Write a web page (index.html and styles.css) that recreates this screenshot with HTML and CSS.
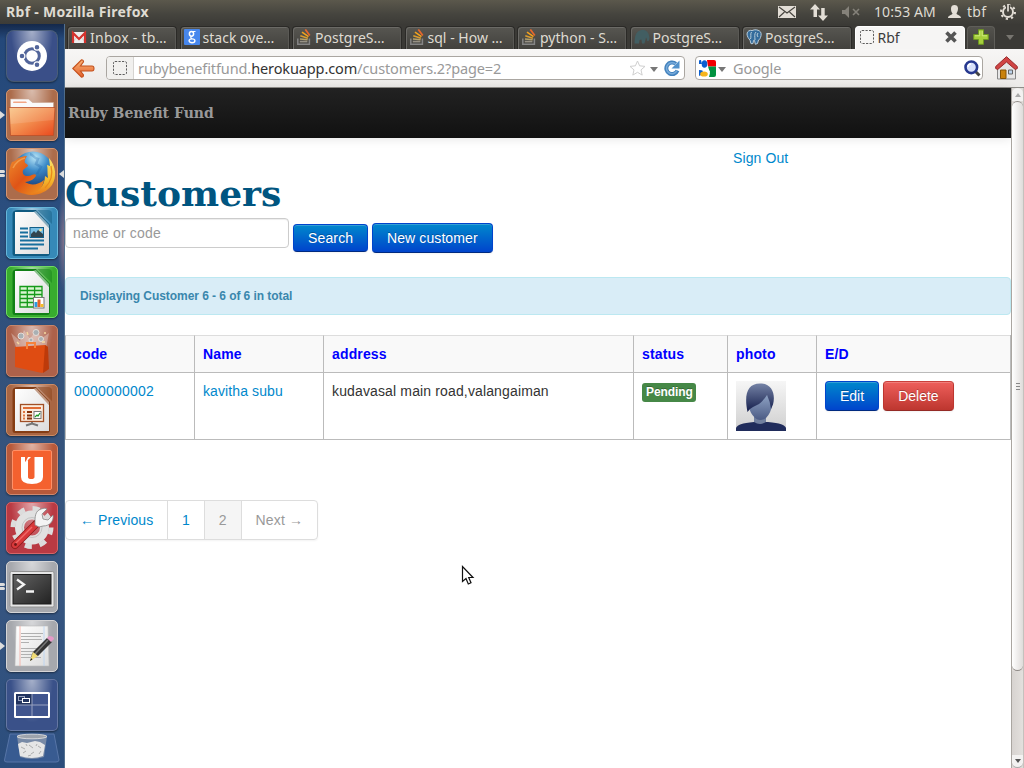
FILE: index.html
```html
<!DOCTYPE html>
<html lang="en">
<head>
<meta charset="utf-8">
<title>Rbf</title>
<link rel="stylesheet" href="styles.css">
</head>
<body>
<svg class="defs" width="0" height="0" aria-hidden="true">
  <defs>
    <linearGradient id="paper" x1="0" y1="0" x2="1" y2="1"><stop offset="0" stop-color="#fff"/><stop offset="1" stop-color="#dcdcdc"/></linearGradient>
    <linearGradient id="folder" x1="0" y1="0" x2="1" y2="1"><stop offset="0" stop-color="#f9c586"/><stop offset=".5" stop-color="#f28a4c"/><stop offset="1" stop-color="#e9481c"/></linearGradient>
    <linearGradient id="arrow" x1="0" y1="0" x2="0" y2="1"><stop offset="0" stop-color="#f9b478"/><stop offset="1" stop-color="#e4602a"/></linearGradient>
    <radialGradient id="globe" cx=".55" cy=".15" r=".8"><stop offset="0" stop-color="#b9e6f7"/><stop offset=".4" stop-color="#3b8ac8"/><stop offset="1" stop-color="#12336f"/></radialGradient>
    <linearGradient id="fox" x1="0" y1="0" x2="1" y2="1"><stop offset="0" stop-color="#ee8a2c"/><stop offset=".5" stop-color="#df5416"/><stop offset="1" stop-color="#ef9a22"/></linearGradient>
    <linearGradient id="flame" x1="0" y1="0" x2="0" y2="1"><stop offset="0" stop-color="#fbe36b"/><stop offset=".6" stop-color="#f5b92c"/><stop offset="1" stop-color="#e9781a"/></linearGradient>
    <linearGradient id="screen" x1="0" y1="0" x2="1" y2="1"><stop offset="0" stop-color="#636363"/><stop offset="1" stop-color="#222"/></linearGradient>
    <linearGradient id="hair" x1="0" y1="0" x2="0" y2="1"><stop offset="0" stop-color="#7583a6"/><stop offset="1" stop-color="#131d4b"/></linearGradient>
    <linearGradient id="face" x1="0" y1="0" x2="0" y2="1"><stop offset="0" stop-color="#91a5c6"/><stop offset="1" stop-color="#4b5b85"/></linearGradient>
    <linearGradient id="photobg" x1="0" y1="0" x2="0" y2="1"><stop offset="0" stop-color="#f6f6f6"/><stop offset="1" stop-color="#cfcfcf"/></linearGradient>
    <symbol id="stack" viewBox="0 0 16 16"><path d="M1.800 9.500v5.700h11.600V9.500" fill="none" stroke="#858585" stroke-width="1.500"/><path d="M3.800 12.600h7.600" stroke="#969185" stroke-width="1.600"/><path d="M4 10l7.600.8" stroke="#b3a06b" stroke-width="1.500"/><path d="M4.300 6.800l7.600 2.400" stroke="#d99c30" stroke-width="1.600"/><path d="M6 3.200l6.500 4.500" stroke="#f4a21c" stroke-width="1.600"/><path d="M9.300.4l4.500 6.200" stroke="#e8672c" stroke-width="1.700"/></symbol>
    <symbol id="blank" viewBox="0 0 16 16"><rect x="1.500" y="1.500" width="13" height="13" rx="1.500" fill="none" stroke="#5d5d5d" stroke-dasharray="2.200 1.300"/></symbol>
    <symbol id="elephant" viewBox="0 0 16 16"><path d="M1 5C1 2 4 .8 6 1.600 9 0 12 1 13.500 2c2 1 2 4 1 6.500-.5 1.400-1 2.300-2 2.500l-1 3.500-2.200.8-.8-4-1 .1-.5 3.200-2 .1L4 11.200C2.500 9.500 1.200 7.500 1 5z"/></symbol>
    <symbol id="mammoth" viewBox="0 0 16 16"><path d="M.5 14.500Q.5 5 4 2.500 9-.8 13 2.500q3 3 2.300 8-.3 1.500-1.500 1.500-1.300 0-.8-2l-1-1.500-1.500 6H8l-.5-4-2 .5-.5 3.500z"/></symbol>
    <symbol id="office" viewBox="0 0 52 52"><path d="M12 3h18l14 15v28q0 3-3 3H9q-2.500 0-2.500-2V7q0-4 5.500-4z" fill="currentColor"/><path d="M31 3h11q4 0 4 4v10z" fill="currentColor" opacity=".5"/><path d="M9 5h19l15 16v26H9z" fill="url(#paper)"/><path d="M27 5l16 16v-3L30 4z" fill="#fff" opacity=".5"/></symbol>
  </defs>
</svg>
<header class="panel">
  <span class="panel-title">Rbf - Mozilla Firefox</span>
  <div class="tray">
    <svg class="t-mail" width="18" height="12" viewBox="0 0 18 12"><rect width="18" height="12" fill="#e3ded6"/><path d="M1 1l8 6 8-6M1 11l5.500-5M17 11l-5.500-5" fill="none" stroke="#45433d" stroke-width="1.100"/></svg>
    <svg class="t-net" width="18" height="17" viewBox="0 0 18 17"><path d="M5 0l5 5.500H7V13H3.500V5.500H0zM13 17l-5-5.500h3.200V4h3.500v7.500H18z" fill="#e3ded6"/></svg>
    <svg class="t-vol" width="18" height="12" viewBox="0 0 18 12"><path d="M0 4h3l4-4v12L3 8H0z" fill="#85827a"/><path d="M11 3l6 6M17 3l-6 6" stroke="#85827a" stroke-width="1.600"/></svg>
    <span class="clock">10:53 AM</span>
    <svg class="t-user" width="13" height="14" viewBox="0 0 13 14"><path d="M3 3.500C3 1 4.500 0 6.500 0S10 1 10 3.500 9 7 8.500 8.500c0 1.500 4.500 1.500 4.500 4.500H0c0-3 4.500-3 4.500-4.500C3.500 7 3 6 3 3.500z" fill="#e3ded6"/></svg>
    <span class="user">tbf</span>
    <svg class="t-gear" width="16" height="16" viewBox="0 0 16 16"><circle cx="8" cy="8" r="5" fill="none" stroke="#e3ded6" stroke-width="2"/><circle cx="8" cy="8" r="7" fill="none" stroke="#e3ded6" stroke-width="2" stroke-dasharray="2.200 3.300"/><path d="M8 1v7" stroke="#45433d" stroke-width="4"/><path d="M8 0v7.500" stroke="#e3ded6" stroke-width="1.700"/></svg>
  </div>
</header>
<div class="desktop">
  <nav class="launcher">
    <div class="tile navy"><svg viewBox="0 0 52 52"><circle cx="26" cy="26" r="15" fill="#fff"/><circle cx="26" cy="26" r="7.300" fill="none" stroke="#52659a" stroke-width="3"/><g stroke="#fff" stroke-width="1.200" fill="#52659a"><circle cx="16" cy="26" r="2.900"/><circle cx="31" cy="17.300" r="2.900"/><circle cx="31" cy="34.700" r="2.900"/></g></svg></div>
    <div class="tile copper"><i class="run one"></i><svg viewBox="0 0 52 52"><path d="M4.500 10h18l4 3.500h21V20h-43z" fill="#fafafa" stroke="#c9a491" stroke-width=".6"/><path d="M7.500 12.500H20l1 1.500H7z" fill="#f2a584"/><path d="M3 18.500h46l-1.500 28h-43z" fill="url(#folder)" stroke="#ba4f28" stroke-width=".8"/><path d="M3.500 19h45l-1 12-43 4z" fill="#fff" opacity=".12"/></svg></div>
    <div class="tile copper"><i class="run two"></i><i class="focus"></i><svg viewBox="0 0 52 52"><circle cx="27" cy="24" r="20.500" fill="url(#globe)"/><path d="M24 6c4 1 3 4 8 5l-2 5 5 3-4 7" stroke="#1e60a5" stroke-width="2.500" fill="none" opacity=".3"/><path d="M43 10c7 8 8 19 3 27-6 8-17 12-27 9 13-1 20-8 20-18l3 2c-1-5 0-9-1-13l3 1z" fill="url(#flame)"/><path d="M45 18c2 8 0 16-6 22" fill="none" stroke="#e98a1c" stroke-width="1.300"/><path d="M6 14c1 0 3-1 4-2 3-3 7-4 11-4-2 3-3 5-2 7 2 1 3 2 3 3l-5 4c-1 4 1 6 5 6 4 0 6-3 8-1 0 3-6 7-11 7 6 4 13 3 19-2-1 9-9 15-18 14C9 45 3 37 3 27c0-5 1-9 3-13z" fill="url(#fox)"/><path d="M7 20c3-6 8-9 12-10" fill="none" stroke="#f6ab58" stroke-width="1.500" opacity=".7"/></svg></div>
    <div class="tile writer"><svg viewBox="0 0 52 52"><use href="#office"/><path d="M14 21.500h8m-8 4h8m-8 4h8m-8 4h24m-24 4h24m-24 4h18" stroke="#176f9d" stroke-width="1.800"/><rect x="24" y="20.500" width="13.500" height="10" fill="#79bfe4" stroke="#135f88"/><path d="M25 30v-3l3-3 2 2 2-3 5 4v3z" fill="#31454f"/><circle cx="34.500" cy="23" r="1.300" fill="#ffe38a"/></svg></div>
    <div class="tile calc"><svg viewBox="0 0 52 52"><use href="#office"/><path d="M14 20.500h22V41H14zm0 4h22m-22 4h22m-22 4h22m-22 4h22M21.300 20.500V41m7.300-20.500V41" fill="#d9f5d0" stroke="#159a19" stroke-width="1.300"/><rect x="27.500" y="31.500" width="10.500" height="10.500" fill="#fff" stroke="#777"/><path d="M28.500 36h3v5h-3z" fill="#2b9be0"/><path d="M31.500 33.500h3V41h-3z" fill="#e56326"/><path d="M34.500 38h3v3h-3z" fill="#f5bc2a"/></svg></div>
    <div class="tile copper2"><svg viewBox="0 0 52 52"><path d="M10 22L5 8l9 8 4-11 6 9 7-10 4 10 8-6-3 15z" fill="#fff" opacity=".3"/><g fill="#a9b0b4" stroke="#e5ddd8"><circle cx="15" cy="11" r="3"/><circle cx="30" cy="7.500" r="3"/><circle cx="35" cy="14" r="2.500"/><circle cx="25" cy="15" r="2"/></g><path d="M11 17l2 2m8-12 1 3m17-3v2m-3 8h3" stroke="#f5d9a0" stroke-width="1.500"/><path d="M9 22l30-2 3 2-1 23-5 3-27-6z" fill="#df4c12"/><path d="M39 20l3 2 1 22-6 4z" fill="#bd3a0a"/><path d="M21 24v-6h8v5" fill="none" stroke="#f7823a" stroke-width="2"/></svg></div>
    <div class="tile impress"><svg viewBox="0 0 52 52"><use href="#office"/><rect x="14.500" y="20.500" width="23" height="17" fill="#fbebdd" stroke="#a14f25" stroke-width="1.300"/><path d="M17 24h18" stroke="#df6c36" stroke-width="2"/><path d="M17 28h2m-2 3.500h2m-2 3h2" stroke="#e0763f" stroke-width="2"/><path d="M21 28h5m-5 3.500h5m-5 3h5" stroke="#87320a" stroke-width="2"/><rect x="28" y="27.500" width="7" height="7" fill="#fff" stroke="#777"/><path d="M29 33l2-2 1 1 2-3" fill="none" stroke="#1c9a25" stroke-width="1.200"/><path d="M26 38v2m-6 1.500 6-2 6 2" fill="none" stroke="#777" stroke-width="2"/></svg></div>
    <div class="tile one-tile"><svg viewBox="0 0 52 52"><rect x="6.500" y="7.500" width="39" height="39" rx="1.500" fill="#f4612f" stroke="#ff9067"/><path d="M15 14h4v5l3-2v17q0 2 3.200 2t3.300-2V14H37v20q0 7-11 7t-11-7z" fill="#fff"/><path d="M19 20l6-6h-3z" fill="#fff"/></svg></div>
    <div class="tile red"><svg viewBox="0 0 52 52"><g fill="none"><circle cx="26" cy="25.500" r="12.500" stroke="#e1e1e1" stroke-width="9"/><circle cx="26" cy="25.500" r="19" stroke="#dcdcdc" stroke-width="5" stroke-dasharray="7 7.920"/><circle cx="26" cy="25.500" r="10" stroke="#c4c4c4" stroke-width="1"/></g><path d="M9 43L30 22" stroke="#8e1a1a" stroke-width="7.800" stroke-linecap="round"/><path d="M9 43L29 23" stroke="#d8383a" stroke-width="6.200" stroke-linecap="round"/><path d="M29 20c0-5 0-11 6-13 3-1 5-1 6 0l-5 5 1 5 5 1 5-5c1 6-3 11-10 11l-4 1-4-2z" fill="#f4f4f4" stroke="#888" stroke-width=".8"/><path d="M9 42l17-17" stroke="#ef6a68" stroke-width="1.500"/><circle cx="9.500" cy="42.500" r="1.400" fill="#701717"/></svg></div>
    <div class="tile silver"><i class="run two"></i><svg viewBox="0 0 52 52"><rect x="4" y="10.500" width="44" height="35.500" rx="1.500" fill="#e6e6e6" stroke="#929292"/><rect x="7" y="13.500" width="38" height="29.500" fill="url(#screen)" stroke="#1c1c1c"/><path d="M11 18.500l7 5-7 5M20 30.500h8" fill="none" stroke="#f4f4f4" stroke-width="2.300"/></svg></div>
    <div class="tile silver"><i class="run one"></i><svg viewBox="0 0 52 52"><path d="M10 6h32l1 40H9z" fill="url(#paper)" stroke="#bbb" stroke-width=".6"/><path d="M14 6v40" stroke="#f6a9a0" stroke-width=".8"/><path d="M38 6v40" stroke="#b6d3f5" stroke-width=".8"/><path d="M15 13.500h22m-22 3h20m-20 3h21m-21 3h8m-8 6h21m-21 3h19m-19 3h18m-18 3h20" stroke="#b0b0b0" stroke-width="1"/><path d="M25 37l2-5 14-14 5 4-14 14z" fill="#343434"/><path d="M29 34l13-14" stroke="#777" stroke-width="1.500"/><path d="M24 41l3-9 5 4z" fill="#f1dc76"/><path d="M24 41l1-3 1.500 1.500z" fill="#222"/><path d="M41 18l2-2q5 0 5 3l-3 3z" fill="#e59ac8"/></svg></div>
    <div class="tile workspace"><svg viewBox="0 0 52 52"><rect x="9" y="14" width="34" height="24" rx=".5" fill="#40558e" stroke="#fff" stroke-width="2"/><path d="M10 15h16v11H10z" fill="#22345f"/><path d="M26 15v22M10 26h32" stroke="#98a2c0" stroke-width="1"/><rect x="12.500" y="17.500" width="6" height="4" fill="none" stroke="#9ba5c0"/><rect x="16.500" y="19.500" width="7" height="4" fill="#22345f" stroke="#fff"/></svg></div>
    <div class="trash"><svg width="56" height="31" viewBox="0 0 56 31"><path d="M6 1h44l5 26q0 2-3 2H3q-3 0-2.500-2z" fill="#385b91" stroke="#5775a7"/><path d="M13 3h30l-3 21q-12 4-24 0z" fill="#8e9aae" opacity=".75"/><ellipse cx="28" cy="3.500" rx="15" ry="2.300" fill="#9da3ac" stroke="#e5e5e5" stroke-width=".8"/><path d="M14 11l4-2 5 1 4-1 4-1 5 1 5 3-2 11q-11 4-23 0z" fill="#e6e6e6"/><path d="M17 14l4 2m4-4l4 3m5-2l3 2M19 20l3-2m5 3l3-2m5 2l2-3M22 11l1 2M33 11l-1 2M24 23l3-1" stroke="#adadad" fill="none"/></svg></div>
  </nav>
  <main class="browser">
    <div class="tabs">
      <div class="tab"><svg viewBox="0 0 16 16"><rect x="1" y="3" width="14" height="11" fill="#eee"/><path d="M1 14l5-6m9 6l-5-6" stroke="#ccc"/><path d="M2 14V4l6 6 6-6v10" fill="none" stroke="#d5322d" stroke-width="2.200"/></svg><span class="t1">Inbox - tb…</span></div>
      <div class="tab"><svg viewBox="0 0 16 16"><rect width="16" height="16" rx="1" fill="#4787ed"/><g fill="none" stroke="#fff"><ellipse cx="7.500" cy="4.800" rx="2.100" ry="2.400" stroke-width="1.500"/><path d="M9 2.500h2.500M8 7.300q-2.500 1 0 2.300" stroke-width="1.200"/><ellipse cx="8" cy="11.800" rx="2.900" ry="1.900" stroke-width="1.400"/></g></svg><span>stack ove…</span></div>
      <div class="tab"><svg><use href="#stack"/></svg><span>PostgreS…</span></div>
      <div class="tab"><svg><use href="#stack"/></svg><span>sql - How …</span></div>
      <div class="tab"><svg><use href="#stack"/></svg><span>python - S…</span></div>
      <div class="tab"><svg fill="#425e62"><use href="#mammoth"/></svg><span>PostgreS…</span></div>
      <div class="tab"><svg fill="#346c9c" stroke="#b7ccda" stroke-width="1"><use href="#elephant"/><path d="M5.500 3c-1.500 2 0 5-1 7M10 3c-2 2-1 5-1 8m3-7q-2 2 0 4" fill="none"/></svg><span>PostgreS…</span></div>
      <div class="tab active"><svg><use href="#blank"/></svg><span>Rbf</span><svg class="close" viewBox="0 0 12 12"><path d="M1.500 1.500l9 9m0-9l-9 9" stroke="#555" stroke-width="3.600"/></svg></div>
      <div class="newtab"><svg width="16" height="16" viewBox="0 0 16 16"><path d="M5.500.7h5v4.800h4.800v5h-4.800v4.800h-5v-4.800H.7v-5h4.800z" fill="#a6cf3c" stroke="#6e9820"/><path d="M6.800 2v4.800H2m7.200-4.800v4.800H14" fill="none" stroke="#d7ef8c" stroke-width=".8"/></svg></div>
      <svg class="alltabs" width="8" height="5" viewBox="0 0 8 5"><path d="M0 0h8L4 5z" fill="#77756f"/></svg>
    </div>
    <div class="toolbar">
      <svg class="back" width="23" height="19" viewBox="0 0 23 19"><path d="M.8 9.500L9.500.8q2 0 2 2L8.500 7H20q2 0 2 2.500T20 12H8.500l3 4q0 2.200-2 2.200z" fill="url(#arrow)" stroke="#c4511d" stroke-width="1.100"/></svg>
      <div class="url"><div class="site"><svg width="16" height="16"><use href="#blank"/></svg></div><span class="addr">rubybenefitfund.<b>herokuapp.com</b>/customers.2?page=2</span>
        <svg class="star" width="17" height="16" viewBox="0 0 17 16"><path d="M8.500 1l2.100 4.800 5.400.6-4 3.500 1.200 5.200-4.700-2.800-4.700 2.800L5 9.900 1 6.400l5.400-.6z" fill="#fff" stroke="#cfcfcf"/></svg>
        <svg class="down" width="8" height="5" viewBox="0 0 8 5"><path d="M0 0h8L4 5z" fill="#777"/></svg>
        <svg class="reload" width="16" height="16" viewBox="0 0 16 16"><path d="M13.500 10.500A5.800 5.800 0 1 1 11.800 3.800" fill="none" stroke="#4382bd" stroke-width="4"/><path d="M15.500.5v8h-8z" fill="#5191cb"/><path d="M13 10.500A5.500 5.500 0 1 1 11.500 4" fill="none" stroke="#76aada" stroke-width="1.500"/></svg></div>
      <div class="search"><svg width="17" height="17" viewBox="0 0 17 17"><rect width="17" height="17" fill="#fff"/><path d="M8 0h7q2 0 2 2v4.500H9z" fill="#f20000"/><path d="M9 6.500h8V15q0 2-2 2h-5l1-4z" fill="#009240"/><path d="M0 10q3 0 4 1l-2 4-2 1z" fill="#0b5fd0"/><path d="M0 1q0-1 1-1h1l1 4H0z" fill="#0b5fd0"/><ellipse cx="5.500" cy="4" rx="2.800" ry="3.800" fill="#0b5fd0"/><path d="M4 8.500l4-1 3 4-1 1-6-1z" fill="#fff"/><ellipse cx="5" cy="14" rx="3.800" ry="2.600" fill="#f6b51c"/></svg>
        <svg class="sdown" width="8" height="5" viewBox="0 0 8 5"><path d="M0 0h8L4 5z" fill="#777"/></svg><span>Google</span>
        <svg class="mag" width="17" height="17" viewBox="0 0 17 17"><path d="M11 11l4.500 4.500" stroke="#444" stroke-width="3"/><circle cx="7.300" cy="7.300" r="5.800" fill="#d7e0fa" stroke="#26388f" stroke-width="2.600"/><path d="M4 7q0-3 3-3" stroke="#fff" stroke-width="1.500" fill="none"/></svg></div>
      <svg class="home" width="23" height="24" viewBox="0 0 23 24"><path d="M2.500 11v12h18V11l-9-7z" fill="#e6e6e6" stroke="#888"/><path d="M5.500 14h5.500v8.500H5.500z" fill="#c9820d" stroke="#875507"/><path d="M13.500 14h4v4h-4z" fill="#bcd3ea" stroke="#666"/><path d="M.7 12.500v-2L11.500.7l10.800 9.800v2l-2 1-8.800-7.500-8.800 7.500z" fill="#d04444" stroke="#962929"/></svg>
    </div>
    <div class="viewport">
      <div class="page">
        <div class="navbar"><a class="brand">Ruby Benefit Fund</a></div>
        <div class="signout"><a>Sign Out</a></div>
        <h1>Customers</h1>
        <div class="searchform"><input class="field" type="text" placeholder="name or code"><button class="btn primary search-btn">Search</button><a class="btn primary new-btn">New customer</a></div>
        <div class="alert">Displaying Customer 6 - 6 of 6 in total</div>
        <table class="grid">
          <colgroup><col class="c1"><col class="c1"><col class="c3"><col class="c4"><col class="c5"><col></colgroup>
          <thead><tr><th>code</th><th>Name</th><th>address</th><th>status</th><th>photo</th><th>E/D</th></tr></thead>
          <tbody><tr><td class="code"><a>0000000002</a></td><td><a>kavitha subu</a></td><td class="address">kudavasal main road,valangaiman</td><td><span class="label">Pending</span></td>
            <td><svg class="photo" width="50" height="50" viewBox="0 0 50 50"><path d="M0 0h50v50H0z" fill="url(#photobg)"/><path d="M0 50v-3c1-3 6-5 18-6h14c12 1 17 3 18 6v3z" fill="#202c5b"/><path d="M18 34h12v7q-6 4-12 0z" fill="#71809f"/><path d="M13 26l18-13 5 11q-1 8-6 13-6 4-11 0-5-5-6-11z" fill="url(#face)"/><path d="M11.500 31C8 14 11 2.500 24 2.500c13 0 15.500 12 13 21l-2 4.500q-1-8-4-14-3 5-8 9-4 2-6 3-4 2-5.500 5z" fill="url(#hair)"/></svg></td>
            <td><div class="actions"><a class="btn primary">Edit</a><a class="btn danger">Delete</a></div></td></tr></tbody>
        </table>
        <div class="pagination"><a class="prev">← Previous</a><a>1</a><span class="current">2</span><span class="next">Next →</span></div>
      </div>
      <div class="scrollbar"><div class="sb-btn"><svg width="6" height="4" viewBox="0 0 6 4"><path d="M0 4h6L3 0z" fill="#aaa"/></svg></div><div class="thumb"><i></i><i></i><i></i></div><div class="track"></div><div class="sb-btn bottom"><svg width="6" height="4" viewBox="0 0 6 4"><path d="M0 0h6L3 4z" fill="#555"/></svg></div></div>
    </div>
  </main>
</div>
<svg class="cursor" width="14" height="22" viewBox="0 0 14 22"><path d="M1.500 1.500v15l3.500-3 2.300 5.500 2.700-1.200-2.300-5.300H12z" fill="#fff" stroke="#111" stroke-width="1.200"/></svg>
</body>
</html>
```
FILE: styles.css
```css
* { box-sizing: border-box; }
body { margin: 0; width: 1024px; height: 768px; overflow: hidden; background: #fff; font-family: "Noto Sans", "Open Sans", sans-serif; }
svg { flex: none; display: block; }
.defs { position: absolute; }

.panel { height: 24px; display: flex; align-items: center; justify-content: space-between; padding: 0 8px 0 6px; background: linear-gradient(#5b584c, #45443e 60%, #3c3b37); color: #dfdbd2; font-size: 14px; line-height: 24px; }
.panel-title { font-weight: bold; font-size: 14px; letter-spacing: .3px; }
.tray { display: flex; align-items: center; }
.t-net { margin-left: 14px; }
.t-vol { margin-left: 14px; }
.clock { margin-left: 14px; width: 62px; white-space: nowrap; letter-spacing: .1px; }
.t-user { margin-left: 12px; }
.user { margin-left: 6px; width: 20px; letter-spacing: .3px; }
.t-gear { margin-left: 13px; }

.desktop { display: flex; height: 744px; }
.launcher { width: 65px; display: flex; flex-direction: column; gap: 7px; padding: 6px 0 0 6px; background: radial-gradient(ellipse at 100% 29%, #83728a 0, transparent 7%), linear-gradient(#14284a, #24487a 2%, #2b4e7e 25%, #34527b 50%, #375681 75%, #2b4d7c); border-right: 1px solid #52708f; }
.tile { position: relative; flex: none; width: 52px; height: 52px; border-radius: 5px; border: 1px solid rgba(255,255,255,.22); box-shadow: 0 1px 2px rgba(0,0,0,.45); }
.tile > svg { position: relative; width: 52px; height: 52px; margin: -1px; }
.tile::before { content: ""; position: absolute; inset: 0; border-radius: 4px; background: radial-gradient(ellipse at 50% 0, rgba(255,255,255,.55), transparent 60%); }
.navy { background: #3a4f88; background-clip: padding-box; border-radius: 8px; }
.workspace { background: #3a5189; }
.copper { background: #ac6c4b; border-color: #d29572; }
.copper2 { background: #ad614a; border-color: #c7866b; }
.writer { background: #3689b8; border-color: #66b6da; color: #115b81; }
.calc { background: #38ac2e; border-color: #70db62; color: #128016; }
.impress { background: #a96643; border-color: #cc8c65; color: #853d14; }
.one-tile { background: #b8593a; border-color: #d0886e; }
.red { background: #b93a43; border-color: #d66568; }
.silver { background: #a6a8ad; border-color: #d5d5d7; }
.run { position: absolute; left: -7px; }
.run.one { top: 21px; border-left: 5px solid #ddd; border-top: 4px solid transparent; border-bottom: 4px solid transparent; }
.run.two { top: 21px; width: 5px; height: 7px; }
.run.two::before, .run.two::after { content: ""; display: block; height: 3px; margin-bottom: 1px; background: #ddd; border-radius: 0 2px 2px 0; }
.focus { position: absolute; right: -7px; top: 21px; border-right: 5px solid #ddd; border-top: 4px solid transparent; border-bottom: 4px solid transparent; }
.trash { margin: -5px 0 0 -2px; }

.browser { width: 959px; display: flex; flex-direction: column; }
.tabs { height: 25px; display: flex; align-items: flex-end; gap: 2.5px; padding-left: 2px; background: #3b3a36; }
.tab { flex: none; width: 110px; height: 23px; display: flex; align-items: center; gap: 3px; padding: 0 4px 2px 3px; border-radius: 4px 4px 0 0; border: 1px solid #2b2a27; border-bottom: 0; background: linear-gradient(#575651, #42413d); box-shadow: inset 1px 1px 0 #6b6a66, inset -1px 0 0 #5a5955; color: #dfdbd2; font-size: 14px; white-space: nowrap; }
.tab > svg { width: 16px; height: 16px; }
.tab > span { letter-spacing: .02px; }
.tab > .t1 { letter-spacing: .25px; }
.tab.active { background: #f6f5f4; border-color: #fff; color: #3c3c3c; box-shadow: none; }
.tab > .close { width: 12px; height: 12px; margin-left: auto; margin-right: 3px; }
.newtab { flex: none; width: 28px; height: 23px; display: flex; align-items: center; justify-content: center; padding-bottom: 2px; border-radius: 4px 4px 0 0; border: 1px solid #5f5e59; border-bottom: 0; background: linear-gradient(#53524d, #403f3b); }
.alltabs { margin: 0 0 9px 8px; }
.toolbar { height: 39px; display: flex; align-items: center; padding: 0 6px 0 7px; background: linear-gradient(#f7f6f5, #eceae8); border-bottom: 1px solid #8f8d89; }
.url, .search { height: 24px; display: flex; align-items: center; border: 1px solid #aaa6a1; border-radius: 4px; background: #fff; color: #999; font-size: 14.5px; white-space: nowrap; }
.url { width: 579px; margin-left: 11px; padding-right: 4px; }
.site { width: 27px; height: 22px; display: flex; align-items: center; justify-content: center; background: #f1f0ee; border-right: 1px solid #d6d4d1; border-radius: 3px 0 0 3px; }
.addr { margin-left: 4px; width: 364px; letter-spacing: -.11px; }
.addr b { font-weight: normal; color: #333; }
.star { margin-left: auto; }
.down { margin: 2px 6px 0 4px; }
.search { width: 288px; margin-left: 10px; padding: 0 1px 0 3px; }
.search span { letter-spacing: -.1px; }
.sdown { margin: 2px 7px 0 2px; }
.mag { margin-left: auto; }
.home { margin-left: 12px; }

.viewport { flex: 1; display: flex; min-height: 0; }
.page { width: 946px; background: #fff; color: #333; font: 14px/20px "Liberation Sans", Arial, sans-serif; }
.page a { color: #0088cc; text-decoration: none; }
.navbar { height: 50px; padding: 15px 3px; background: linear-gradient(#222, #111); box-shadow: 0 1px 10px rgba(0,0,0,.1); }
.page .brand { color: #999; font: bold 14px/20px "DejaVu Serif", serif; display: block; }
.signout { padding: 10px 0 0 668px; letter-spacing: .1px; }
h1 { margin: 5px 0 0; color: #005580; font: bold 36px/40px "DejaVu Serif", serif; letter-spacing: .05px; }
.searchform { display: flex; align-items: center; gap: 4px; margin-top: 5px; height: 40px; }
.field { align-self: flex-start; width: 224px; height: 30px; padding: 4px 7px; border: 1px solid #ccc; border-radius: 4px; box-shadow: inset 0 1px 1px rgba(0,0,0,.075); font: 14px/20px "Liberation Sans", Arial, sans-serif; letter-spacing: .2px; }
.field::placeholder { color: #999; opacity: 1; }
.btn { display: block; height: 30px; padding: 4px 14px; border: 1px solid; border-radius: 4px; font: 14px/20px "Liberation Sans", Arial, sans-serif; text-shadow: 0 -1px 0 rgba(0,0,0,.25); box-shadow: inset 0 1px 0 rgba(255,255,255,.2), 0 1px 2px rgba(0,0,0,.05); white-space: nowrap; }
.page .btn { color: #fff; }
.primary { background: linear-gradient(#0088cc, #0044cc); border-color: #0044cc #0044cc #002a80; }
.danger { background: linear-gradient(#ee5f5b, #bd362f); border-color: #c9403b #bd362f #942a25; }
.search-btn { width: 75px; height: 28px; padding: 3px 14px; letter-spacing: .15px; }
.new-btn { width: 121px; letter-spacing: .1px; }
.alert { margin-top: 19px; height: 38px; padding: 8px 14px; border: 1px solid #bce8f1; border-radius: 4px; background: #d9edf7; color: #3a87ad; font-weight: bold; font-size: 12px; letter-spacing: -.06px; }
.grid { width: 946px; margin-top: 20px; table-layout: fixed; border-spacing: 0; border-right: 1px solid #bbb; }
.c1 { width: 129px; } .c3 { width: 310px; } .c4 { width: 94px; } .c5 { width: 89px; }
.grid th, .grid td { padding: 8px; text-align: left; vertical-align: top; border-left: 1px solid #bbb; border-bottom: 1px solid #bbb; }
.grid th { height: 38px; border-top: 1px solid #ddd; background: #f9f9f9; color: #00f; letter-spacing: .15px; }
.grid td { height: 67px; }
.grid .code { letter-spacing: .22px; }
.grid .address { letter-spacing: .14px; }
.grid td:nth-child(2) { letter-spacing: .1px; }
.label { display: inline-block; width: 54px; height: 19px; padding: 2px 4px; border-radius: 3px; background: #468847; color: #fff; font: bold 12px/15px "Liberation Sans", Arial, sans-serif; letter-spacing: -.1px; text-shadow: 0 -1px 0 rgba(0,0,0,.25); vertical-align: top; margin-top: 2px; }
.actions { display: flex; gap: 4px; }
.pagination { display: inline-flex; height: 40px; margin-top: 60px; border: 1px solid #ddd; border-radius: 4px; box-shadow: 0 1px 2px rgba(0,0,0,.05); line-height: 38px; }
.pagination > * { padding: 0 14px; border-right: 1px solid #ddd; white-space: nowrap; }
.pagination .prev { width: 102px; letter-spacing: .1px; }
.pagination .current { background: #f5f5f5; color: #999; }
.pagination .next { color: #999; border: 0; letter-spacing: .15px; }

.scrollbar { width: 13px; display: flex; flex-direction: column; background: #dfdbd8; border-left: 1px solid #aaa6a1; border-right: 1px solid #c5c1bd; }
.sb-btn { height: 13px; display: flex; align-items: center; justify-content: center; background: #f3f2f1; border-radius: 6px 6px 0 0; }
.sb-btn.bottom { border-radius: 0 0 6px 6px; border-bottom: 1px solid #aaa; }
.thumb { height: 570px; display: flex; flex-direction: column; align-items: center; justify-content: center; gap: 2px; border: 1px solid #8f8b87; border-width: 1px 0; border-radius: 6px; background: linear-gradient(90deg, #fff, #dfdcda); }
.thumb i { width: 4px; height: 1px; background: #888; }
.track { flex: 1; background: linear-gradient(90deg, #d7d3d0, #e3e0dd); }
.cursor { position: absolute; left: 461px; top: 565px; }
```
